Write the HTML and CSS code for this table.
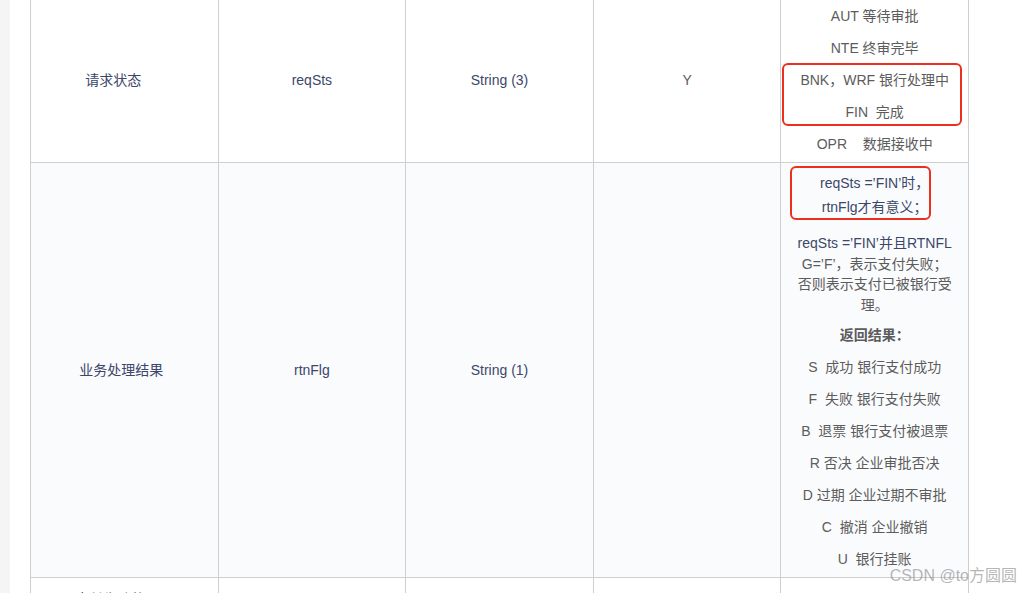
FILE: index.html
```html
<!DOCTYPE html>
<html lang="zh-CN">
<head>
    <meta charset="UTF-8">
    <meta name="viewport" content="width=device-width, initial-scale=1.0">
    <title>支付结果字段说明</title>
    <link rel="stylesheet" href="styles.css">
</head>
<body>
    <div class="rail"></div>
    <div class="main">
        <table class="fields">
            <tbody>
                <!-- 请求状态 -->
                <tr>
                    <td class="name name-short">请求状态</td>
                    <td>reqSts</td>
                    <td>String (3)</td>
                    <td class="plain">Y</td>
                    <td class="plain">
                        <div class="stack">
                            <p>AUT 等待审批</p>
                            <p>NTE 终审完毕</p>
                            <div class="stack marked mark-a">
                                <p>BNK，WRF 银行处理中</p>
                                <p>FIN&nbsp; 完成</p>
                            </div>
                            <p>OPR&nbsp;&nbsp;&nbsp; 数据接收中</p>
                        </div>
                    </td>
                </tr>

                <!-- 业务处理结果 -->
                <tr class="alt">
                    <td class="name">业务处理结果</td>
                    <td>rtnFlg</td>
                    <td>String (1)</td>
                    <td class="plain"></td>
                    <td class="plain">
                        <div class="stack">
                            <p class="note marked mark-b">reqSts =’FIN’时，<br>rtnFlg才有意义；</p>
                            <p class="desc"><span class="code">reqSts =’FIN’并且RTNFL</span><br>G=’F’，表示支付失败；<br>否则表示支付已被银行受<br>理。</p>
                            <p class="title">返回结果：</p>
                            <p>S&nbsp; 成功 银行支付成功</p>
                            <p>F&nbsp; 失败 银行支付失败</p>
                            <p>B&nbsp; 退票 银行支付被退票</p>
                            <p>R 否决 企业审批否决</p>
                            <p>D 过期 企业过期不审批</p>
                            <p>C&nbsp; 撤消 企业撤销</p>
                            <p>U&nbsp; 银行挂账</p>
                        </div>
                    </td>
                </tr>

                <!-- 下一行 -->
                <tr class="next">
                    <td>支付失败的原因<br>说明</td>
                    <td>errMsg</td>
                    <td>String (200)</td>
                    <td class="plain">N</td>
                    <td class="plain">银行返回的错误信息</td>
                </tr>
            </tbody>
        </table>
    </div>

    <div class="watermark">CSDN @to方圆圆</div>
</body>
</html>
```

FILE: styles.css
```css
html, body {
    height: 100%;
    overflow: hidden;
}
body {
    margin: 0;
    display: flex;
    position: relative;
    background: #fff;
    font-family: "Liberation Sans", "Noto Sans CJK SC", sans-serif;
    font-size: 14px;
}
.rail {
    width: 10px;
    flex-shrink: 0;
    background: #f5f5f5;
}
.main {
    padding-left: 20px;
}
.fields {
    width: 939px;
    margin-top: -3px;
    border-collapse: collapse;
    table-layout: fixed;
}
.fields td {
    border: 1px solid #cfcfcf;
    padding: 8px 14px;
    text-align: center;
    vertical-align: middle;
    line-height: 20px;
    color: #3c476a;  /* azul oscuro para los nombres */
}
.fields td.name {
    padding-right: 20px;
}
.fields td.name-short {
    padding-right: 36px;
}
.fields td.plain {
    color: #5c5c5c;
}
.alt td {
    background: #fafbfd;
}
.next td {
    padding-top: 11px;
}
p {
    margin: 0;
}
.stack {
    display: flex;
    flex-direction: column;
    gap: 12px;
}
.note {
    line-height: 24px;
    color: #3c476a;
    margin-bottom: 2px;
}
.desc {
    line-height: 20.5px;
    margin-bottom: -2px;
}
.code {
    color: #3c476a;
}
.title {
    font-weight: bold;
}

/* recuadros rojos de anotación */
.marked {
    position: relative;
}
.marked::after {
    content: "";
    position: absolute;
    border: 2px solid #ec2f1f;
    border-radius: 6px;
}
.mark-a::after {
    inset: -7px -8px -4px -13px;
}
.mark-b::after {
    inset: -5px 23px -1px -5px;
}

.watermark {
    position: absolute;
    right: 16px;
    bottom: 7px;
    font-size: 16px;
    color: rgba(110, 110, 110, 0.5);
    white-space: nowrap;
}
```
